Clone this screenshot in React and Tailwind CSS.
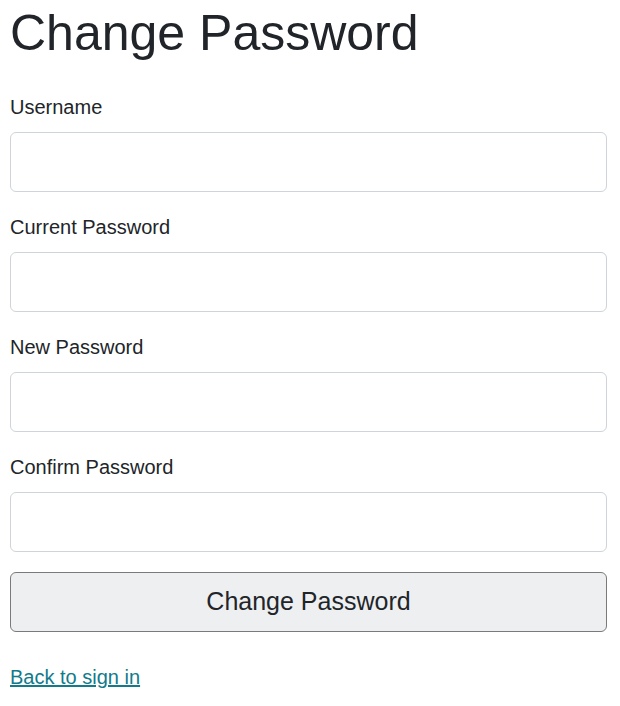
export default function App() {
  const fields = ['Username', 'Current Password', 'New Password', 'Confirm Password'];

  return (
    <div className="min-h-screen bg-white px-[10px] pr-[13px] text-[#212529] font-['Liberation_Sans',Arial,sans-serif]">
      <h1 className="text-[50px] leading-[60px] pt-[3px] mb-[29px]">Change Password</h1>
      <form>
        {fields.map((label) => (
          <div key={label} className="mb-[20px]">
            <label className="block text-[20px] leading-[30px] mb-[10px]">{label}</label>
            <input
              type={label === 'Username' ? 'text' : 'password'}
              className="block w-full h-[60px] px-4 rounded-[6px] border border-[#ced4da] bg-white text-[20px] outline-none"
            />
          </div>
        ))}
        <button
          type="button"
          className="block w-full h-[60px] rounded-[6px] border border-[#7a7a7a] bg-[#eeeff1] text-[25px] text-[#212529]"
        >
          Change Password
        </button>
      </form>
      <a href="#" className="inline-block mt-[30px] text-[20px] leading-[30px] text-[#117a8b] underline">
        Back to sign in
      </a>
    </div>
  );
}
